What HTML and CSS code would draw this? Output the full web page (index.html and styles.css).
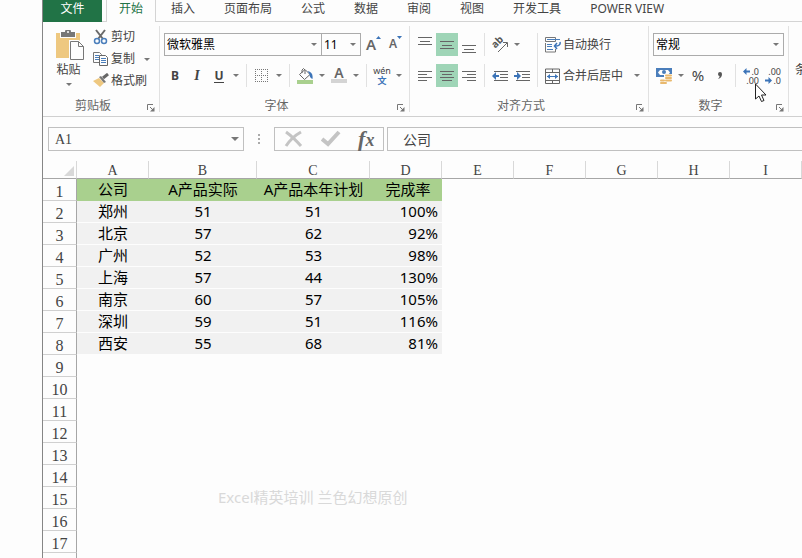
FILE: index.html
```html
<!DOCTYPE html>
<html lang="zh-CN">

<head>
  <meta charset="utf-8">
  <title>Excel</title>
  <link rel="stylesheet" href="styles.css">
</head>

<body>
  <div class="app">
    <!-- ribbon tabs -->
    <nav class="tabs">
      <button class="tab tab-file">文件</button>
      <button class="tab tab-active">开始</button>
      <button class="tab">插入</button>
      <button class="tab">页面布局</button>
      <button class="tab">公式</button>
      <button class="tab">数据</button>
      <button class="tab">审阅</button>
      <button class="tab">视图</button>
      <button class="tab">开发工具</button>
      <button class="tab">POWER VIEW</button>
    </nav>

    <div class="ribbon">
      <!-- clipboard -->
      <section class="group group-clipboard">
        <div class="clipboard">
          <button class="big-tool">
            <svg width="28" height="30" viewBox="0 0 28 30">
              <path d="M0 3h24v25H0z" fill="#eec880" />
              <path d="M4 3h16v5H4z" fill="#fdfdfd" />
              <path d="M5 2h4a3 3 0 0 1 6 0h4v5H5z" fill="#777" />
              <circle cx="12" cy="2" r="1" fill="#fdfdfd" />
              <path d="M13 10h10l5 5v15H13z" fill="#fdfdfd" />
              <path d="M14.500 11.500h8l5 5v13h-13zM22.500 11.500v5h5" fill="#fdfdfd" stroke="#777" />
            </svg>
            <span>粘贴</span>
            <i class="arrow"></i>
          </button>
          <div class="small-tools">
            <button class="text-tool">
              <svg width="16" height="16" viewBox="0 0 16 16" fill="none">
                <path d="M3 1l7 9M12 1L5 10" stroke="#6a6a6a" stroke-width="2" />
                <circle cx="4" cy="12" r="2.500" stroke="#4a7ebb" stroke-width="1.500" />
                <circle cx="11" cy="12" r="2.500" stroke="#4a7ebb" stroke-width="1.500" />
              </svg>
              剪切
            </button>
            <button class="text-tool">
              <svg width="16" height="16" viewBox="0 0 16 16">
                <path d="M.5 1.500h6l2 2v8h-8z" fill="#fdfdfd" stroke="#777" />
                <path d="M2 4.500h4M2 6.500h4M2 8.500h4" stroke="#4a7ebb" />
                <path d="M6.500 4.500h6l2 2v8h-8z" fill="#fdfdfd" stroke="#666" />
                <path d="M8 7.500h5M8 9.500h5M8 11.500h5" stroke="#4a7ebb" />
              </svg>
              复制
              <i class="arrow copy-arrow"></i>
            </button>
            <button class="text-tool">
              <svg width="16" height="16" viewBox="0 0 16 16">
                <path d="M0 8l6-3 5 5-4 4z" fill="#eec880" />
                <path d="M6 4l2-1 5 6-2 1z" fill="#777" />
                <path d="M10 5l5-4" stroke="#666" stroke-width="3" />
              </svg>
              格式刷
            </button>
          </div>
        </div>
        <footer class="group-label">
          <span>剪贴板</span>
          <button class="launcher" aria-label="剪贴板设置"><svg width="8" height="8"><use href="#launch" /></svg></button>
        </footer>
      </section>

      <!-- font -->
      <section class="group group-font">
        <div class="rows">
          <div class="row">
            <label class="combo combo-font"><select aria-label="字体"><option>微软雅黑</option></select></label>
            <label class="combo combo-size"><select aria-label="字号"><option>11</option></select></label>
            <button class="tool tool-size" aria-label="增大字号">
              <span class="grow">A</span><svg width="6" height="12"><path d="M0 6l2.500-3L5 6z" fill="#3c74b8" /></svg>
            </button>
            <button class="tool tool-size" aria-label="减小字号">
              <span class="shrink">A</span><svg width="6" height="12"><path d="M0 3h5L2.500 6z" fill="#3c74b8" /></svg>
            </button>
          </div>
          <div class="row">
            <button class="tool"><b>B</b></button>
            <button class="tool"><i class="italic">I</i></button>
            <button class="tool"><b class="under">U</b></button>
            <i class="arrow"></i>
            <hr class="sep">
            <button class="tool" aria-label="边框">
              <svg width="14" height="14" fill="none" stroke="#777" stroke-dasharray="1 1">
                <path d="M0 .5h13M0 6.500h13M0 12.500h13M.5 0v13M6.500 0v13M12.500 0v13" />
              </svg>
            </button>
            <i class="arrow"></i>
            <hr class="sep">
            <button class="tool" aria-label="填充颜色">
              <svg width="16" height="16" viewBox="0 0 16 16" fill="none">
                <path d="M2.500 6.500L8 1.500l5 5-5.500 5z" stroke="#666" />
                <path d="M5 5V2q1.500-3 3 0v4" stroke="#666" />
                <path d="M10.500 3q6 1 5 8q-3-1-3-5z" fill="#3c74b8" />
                <path d="M0 12h16v4H0z" fill="#a9d08e" />
              </svg>
            </button>
            <i class="arrow"></i>
            <button class="tool tool-color">A</button>
            <i class="arrow"></i>
            <hr class="sep">
            <button class="tool tool-pinyin"><span>wén</span><span class="blue">文</span></button>
            <i class="arrow"></i>
          </div>
        </div>
        <footer class="group-label">
          <span>字体</span>
          <button class="launcher" aria-label="字体设置"><svg width="8" height="8"><use href="#launch" /></svg></button>
        </footer>
      </section>

      <!-- alignment -->
      <section class="group group-align">
        <div class="columns">
          <div class="rows">
            <div class="row">
              <button class="tool" aria-label="顶端对齐">
                <svg width="14" height="16" stroke="#666"><path d="M0 .5h14M2 4.500h10M0 7.500h14" /></svg>
              </button>
              <button class="tool on" aria-label="垂直居中">
                <svg width="14" height="16" stroke="#666"><path d="M0 4.500h14M2 8.500h10M0 11.500h14" /></svg>
              </button>
              <button class="tool" aria-label="底端对齐">
                <svg width="14" height="16" stroke="#666"><path d="M0 8.500h14M2 12.500h10M0 15.500h14" /></svg>
              </button>
              <hr class="sep">
              <button class="tool" aria-label="方向">
                <svg class="turned" width="18" height="18" viewBox="0 0 18 18" fill="none" stroke="#666">
                  <text class="slant" x="-6" y="12" transform="rotate(-45)" fill="#555" stroke="none">ab</text>
                  <path d="M7 16l9-9M12 6.500h4.500V11" />
                </svg>
              </button>
              <i class="arrow"></i>
            </div>
            <div class="row">
              <button class="tool" aria-label="左对齐">
                <svg width="14" height="12" stroke="#666"><path d="M0 1.500h14M0 4.500h9M0 7.500h14M0 10.500h9" /></svg>
              </button>
              <button class="tool on" aria-label="居中">
                <svg width="14" height="12" stroke="#666"><path d="M0 1.500h14M2 4.500h10M0 7.500h14M2 10.500h10" /></svg>
              </button>
              <button class="tool" aria-label="右对齐">
                <svg width="14" height="12" stroke="#666"><path d="M0 1.500h14M5 4.500h9M0 7.500h14M5 10.500h9" /></svg>
              </button>
              <hr class="sep">
              <button class="tool" aria-label="减少缩进量">
                <svg width="16" height="12">
                  <path d="M2 1.500h14M8 4.500h8M8 7.500h8M2 10.500h14" stroke="#666" />
                  <path d="M0 6l4-4v3h3v2H4v3z" fill="#3c74b8" />
                </svg>
              </button>
              <button class="tool" aria-label="增加缩进量">
                <svg width="16" height="12">
                  <path d="M2 1.500h14M8 4.500h8M8 7.500h8M2 10.500h14" stroke="#666" />
                  <path d="M7 6L3 2v3H0v2h3v3z" fill="#3c74b8" />
                </svg>
              </button>
            </div>
          </div>
          <hr class="sep sep-tall">
          <div class="rows">
            <button class="text-tool">
              <svg width="16" height="16" viewBox="0 0 16 16" fill="none">
                <path d="M.5.5h10v4H.5zM.5 6v9h10v-3" stroke="#777" />
                <path d="M2 2.500h13M2 7.500h5M2 9.500h5M2 12.500h6" stroke="#4a7ebb" />
                <path d="M15 5q1 4-5 4M12 6L9.500 9l2.500 3" stroke="#3c74b8" stroke-width="1.500" />
              </svg>
              自动换行
            </button>
            <button class="text-tool">
              <svg width="16" height="16" viewBox="0 0 16 16" fill="none">
                <path d="M.5 1v14.500h14V1zM.5 4.500h14M.5 12.500h14M7.500 1v3M7.500 13v3" stroke="#666" />
                <path d="M2 8.500h11" stroke="#3c74b8" />
                <path d="M5 6L2 8.500 5 11zM10 6l3 2.500-3 2.500z" fill="#3c74b8" />
              </svg>
              合并后居中
              <i class="arrow merge-arrow"></i>
            </button>
          </div>
        </div>
        <footer class="group-label">
          <span>对齐方式</span>
          <button class="launcher" aria-label="对齐设置"><svg width="8" height="8"><use href="#launch" /></svg></button>
        </footer>
      </section>

      <!-- number -->
      <section class="group group-number">
        <div class="rows">
          <div class="row">
            <label class="combo combo-format"><select aria-label="数字格式"><option>常规</option></select></label>
          </div>
          <div class="row">
            <button class="tool" aria-label="会计数字格式">
              <svg width="16" height="16" viewBox="0 0 16 16">
                <path d="M0 0h16v9H0z" fill="#4a7ebb" />
                <path d="M2 4.500L4 2h8l2 2.500L12 7H4z" fill="#fdfdfd" />
                <circle cx="8" cy="4" r="2" fill="#4a7ebb" />
                <path d="M4 9h4V6h8v10H4z" fill="#fdfdfd" />
                <path d="M10 7.500h5M10 10h5M10 12.500h5M5 12.500h3M5 15h5" stroke="#e9b96e" stroke-width="2" stroke-linecap="round" />
              </svg>
            </button>
            <i class="arrow"></i>
            <button class="tool percent">%</button>
            <button class="tool" aria-label="千位分隔样式">
              <svg width="6" height="10"><path d="M1 3a2 2 0 1 1 4 0q0 4-4 5q2-2 1.500-3Q1 5 1 3z" fill="#555" /></svg>
            </button>
            <hr class="sep">
            <button class="tool decimals">
              <span><svg width="7" height="7"><path d="M0 3.500L3.500 0v2.500H7v2H3.500V7z" fill="#3c74b8" /></svg>.0</span>
              <span>.00</span>
            </button>
            <button class="tool decimals">
              <span>.00</span>
              <span><svg width="7" height="7"><path d="M7 3.500L3.500 0v2.500H0v2h3.500V7z" fill="#3c74b8" /></svg>.0</span>
            </button>
          </div>
        </div>
        <footer class="group-label">
          <span>数字</span>
          <button class="launcher" aria-label="数字设置"><svg width="8" height="8"><use href="#launch" /></svg></button>
        </footer>
      </section>

      <section class="group group-styles">
        <button class="styles-tool">条件格式</button>
      </section>
    </div>

    <!-- name box and formula bar -->
    <div class="formula-bar">
      <label class="name-box"><input type="text" value="A1" aria-label="名称框"></label>
      <svg class="grip" width="3" height="11" fill="#aaa"><path d="M0 0h2v2H0zM0 4h2v2H0zM0 8h2v2H0z" /></svg>
      <div class="formula-tools">
        <button aria-label="取消">
          <svg width="20" height="18" fill="none" stroke="#c4c4c4" stroke-width="3"><path d="M2 2q7 5 15 14M17 2Q8 7 2 16" /></svg>
        </button>
        <button aria-label="输入">
          <svg width="20" height="18" fill="none" stroke="#c4c4c4" stroke-width="4"><path d="M1 9l6 5L18 2" /></svg>
        </button>
        <button class="fx">f<small>x</small></button>
      </div>
      <input class="formula" type="text" value="公司" aria-label="编辑栏">
    </div>

    <div class="sheet">
      <table>
        <colgroup>
          <col class="col-head"><col class="col"><col class="col-b"><col class="col-c"><col class="col"><col class="col"><col class="col"><col class="col"><col class="col"><col class="col"><col class="col">
        </colgroup>
        <thead>
          <tr>
            <th class="corner"><svg width="10" height="10"><path d="M10 0v10H0z" fill="#d8d8d8" /></svg></th>
            <th>A</th><th>B</th><th>C</th><th>D</th><th>E</th><th>F</th><th>G</th><th>H</th><th>I</th><th></th>
          </tr>
        </thead>
        <tbody>
          <tr class="title"><th>1</th><td>公司</td><td>A产品实际</td><td>A产品本年计划</td><td class="name">完成率</td></tr>
          <tr class="data"><th>2</th><td>郑州</td><td>51</td><td>51</td><td class="rate">100%</td></tr>
          <tr class="data"><th>3</th><td>北京</td><td>57</td><td>62</td><td class="rate">92%</td></tr>
          <tr class="data"><th>4</th><td>广州</td><td>52</td><td>53</td><td class="rate">98%</td></tr>
          <tr class="data"><th>5</th><td>上海</td><td>57</td><td>44</td><td class="rate">130%</td></tr>
          <tr class="data"><th>6</th><td>南京</td><td>60</td><td>57</td><td class="rate">105%</td></tr>
          <tr class="data"><th>7</th><td>深圳</td><td>59</td><td>51</td><td class="rate">116%</td></tr>
          <tr class="data"><th>8</th><td>西安</td><td>55</td><td>68</td><td class="rate">81%</td></tr>
          <tr><th>9</th></tr>
          <tr><th>10</th></tr>
          <tr><th>11</th></tr>
          <tr><th>12</th></tr>
          <tr><th>13</th></tr>
          <tr><th>14</th></tr>
          <tr><th>15</th></tr>
          <tr><th>16</th></tr>
          <tr><th>17</th></tr>
          <tr><th></th></tr>
        </tbody>
      </table>
      <div class="watermark">Excel精英培训 兰色幻想原创</div>
    </div>
  </div>

  <!-- mouse pointer -->
  <svg class="pointer" width="13" height="20" viewBox="0 0 13 20">
    <path d="M.5 1v15l3.500-3 2.500 5.500 2.500-1L6.500 12H11z" fill="#fff" stroke="#222" />
  </svg>

  <svg class="defs" width="0" height="0">
    <symbol id="launch" viewBox="0 0 8 8">
      <path d="M.5 6V.5H6M3 3l3 3" fill="none" stroke="#777" />
      <path d="M7.500 3v4.500H3z" fill="#777" />
    </symbol>
  </svg>
</body>

</html>
```
FILE: styles.css
```css
* {
  box-sizing: border-box;
}

body {
  margin: 0;
  background-color: #fdfdfd;
  color: #444;
  font: 12px/16px "Noto Sans", "Noto Sans CJK SC", sans-serif;
}

button,
input,
select {
  margin: 0;
  padding: 0;
  border: 0;
  background: none;
  color: inherit;
  font: inherit;
}

svg {
  display: block;
  flex: none;
}

.app {
  height: 100vh;
  margin-left: 42px;
  border-left: 1px solid #868686;
  overflow: hidden;
}

/* tabs */
.tabs {
  display: flex;
  height: 22px;
  overflow: hidden;
  box-shadow: inset 0 -1px #d4d4d4;
}

.tab {
  flex: none;
  height: 22px;
  padding: 0 14px 5px;
  margin-right: 1px;
  white-space: nowrap;
}

.tab-file {
  width: 59px;
  margin-right: 4px;
  background-color: #217346;
  color: #fff;
}

.tab-active {
  padding: 0 12px 5px;
  border: solid #d4d4d4;
  border-width: 0 1px;
  background-color: #fdfdfd;
  color: #217346;
}

/* ribbon */
.ribbon {
  display: flex;
  padding: 4px 0;
  border-bottom: 1px solid #d0d0d0;
  overflow: hidden;
}

.group {
  display: flex;
  flex: none;
  flex-direction: column;
  justify-content: space-between;
  height: 86px;
  border-right: 1px solid #e1e1e1;
}

.group-clipboard {
  width: 117px;
}

.group-font {
  width: 250px;
}

.group-align {
  width: 239px;
}

.group-number {
  width: 140px;
}

.group-styles {
  border: 0;
}

.group-label {
  display: flex;
  align-items: flex-end;
  height: 14px;
  padding-right: 4px;
  color: #666;
  line-height: 12px;
}

.group-label span {
  flex: 1;
  text-align: center;
}

.launcher {
  width: 8px;
  margin-left: 4px;
}

.rows {
  display: flex;
  flex-direction: column;
  gap: 8px;
  padding: 7px 0 0 4px;
}

.columns .rows + .sep + .rows {
  padding-left: 0;
}

.row,
.columns {
  display: flex;
}

.row {
  height: 23px;
}

.tool {
  display: flex;
  flex: none;
  align-items: center;
  justify-content: center;
  width: 22px;
  height: 23px;
}

.on {
  background-color: #9fd5b7;
}

.arrow {
  display: flex;
  flex: none;
  align-items: center;
  justify-content: center;
  width: 12px;
}

.arrow::before {
  border: 3px solid transparent;
  border-top-color: #777;
  border-bottom: 0;
  content: "";
}

.sep {
  width: 1px;
  height: 23px;
  margin: 0 4px;
  border: 0;
  background-color: #e1e1e1;
}

.sep-tall {
  height: 54px;
  margin-top: 7px;
}

.clipboard {
  display: flex;
  padding-left: 7px;
}

.big-tool {
  display: flex;
  flex-direction: column;
  align-items: center;
  gap: 2px;
  width: 37px;
  padding-top: 4px;
}

.big-tool .arrow {
  height: 8px;
}

.big-tool svg {
  margin-left: 3px;
}

.small-tools {
  padding-left: 3px;
}

.text-tool {
  display: flex;
  align-items: center;
  gap: 2px;
  height: 23px;
  padding-left: 3px;
  white-space: nowrap;
}

.small-tools .text-tool {
  height: 22px;
}

.copy-arrow {
  margin-left: 4px;
}

.merge-arrow {
  margin-left: 6px;
}

.combo {
  position: relative;
  height: 23px;
  border: 1px solid #ababab;
  color: #000;
}

.combo select {
  width: 100%;
  height: 21px;
  padding-left: 2px;
  appearance: none;
}

.combo::after,
.name-box::after {
  position: absolute;
  top: 9px;
  right: 4px;
  border: 3px solid transparent;
  border-top-color: #777;
  border-bottom: 0;
  content: "";
}

.combo-font {
  width: 158px;
}

.combo-size {
  width: 40px;
  margin-left: -1px;
}

.combo-format {
  width: 131px;
}

.tool-size {
  padding: 0 0 2px 4px;
  color: #666;
  font-weight: 600;
}

.tool-size svg {
  align-self: flex-start;
}

.grow {
  font-size: 15px;
}

.shrink {
  font-size: 12px;
}

.italic {
  font: italic bold 14px "Liberation Serif", serif;
}

.under {
  border-bottom: 1px solid #444;
  line-height: 13px;
}

.tool-color {
  align-items: flex-end;
  width: 16px;
  height: 19px;
  margin: 0 3px;
  border-bottom: 4px solid #d4d4d4;
  color: #666;
  font-size: 14px;
  font-weight: 600;
  line-height: 12px;
}

.tool-pinyin {
  flex-direction: column;
  font-size: 9px;
  line-height: 10px;
}

.blue {
  color: #3c74b8;
  font-weight: bold;
}

.turned {
  overflow: visible;
}

.slant {
  font: bold 10px "Noto Sans", sans-serif;
}

.percent {
  padding-bottom: 2px;
  font-size: 15px;
}

.decimals {
  flex-direction: column;
  align-items: stretch;
  padding: 0 3px;
  font-size: 9px;
  line-height: 9px;
}

.decimals span {
  display: flex;
  align-items: center;
  justify-content: flex-end;
  gap: 1px;
}

.styles-tool {
  padding: 36px 6px 0;
}

/* formula bar */
.formula-bar {
  display: flex;
  align-items: center;
  padding: 10px 0 10px 5px;
}

.name-box {
  position: relative;
  width: 196px;
  height: 24px;
  border: 1px solid #c0c0c0;
}

.name-box input {
  width: 100%;
  height: 22px;
  padding: 2px 6px 0;
  font: 14px "Liberation Serif", serif;
}

.name-box::after {
  border-width: 4px 4px 0;
}

.grip {
  margin: 0 13px 0 14px;
}

.formula-tools {
  display: flex;
  align-items: center;
  justify-content: space-around;
  width: 110px;
  height: 24px;
  border: 1px solid #c0c0c0;
}

.fx {
  color: #666;
  font: italic bold 22px/20px "Liberation Serif", serif;
}

.fx small {
  font-size: 18px;
}

.formula {
  flex: 1;
  height: 24px;
  margin-left: 3px;
  padding-left: 15px;
  border: 1px solid #c0c0c0;
  border-right: 0;
  font-size: 14px;
}

/* sheet */
.sheet {
  position: relative;
}

table {
  width: 0;
  border-spacing: 0;
  table-layout: fixed;
}

.col-head {
  width: 34px;
}

.col {
  width: 72px;
}

.col-b {
  width: 108px;
}

.col-c {
  width: 113px;
}

th,
td {
  padding: 0;
  text-align: center;
  white-space: nowrap;
}

thead th {
  height: 18px;
  padding-top: 3px;
  border-right: 1px solid #d8d8d8;
  border-bottom: 1px solid #a6a6a6;
  font: 14px/14px "Liberation Serif", serif;
}

.corner svg {
  margin-left: 21px;
}

tbody th {
  height: 22px;
  padding-top: 5px;
  border-right: 1px solid #a6a6a6;
  border-bottom: 1px solid #d0d0d0;
  font: 16px/16px "Liberation Serif", serif;
}

td {
  color: #000;
  font-size: 15px;
  line-height: 21px;
}

.title td {
  border-bottom: 1px solid #a9d08e;
  background-color: #a9d08e;
}

.data td {
  border-bottom: 1px solid #fdfdfd;
  background-color: #f1f1f1;
}

.rate {
  padding-right: 4px;
  text-align: right;
}

.name {
  padding-left: 4px;
}

.watermark {
  position: absolute;
  top: 326px;
  left: 175px;
  color: #d9d9d9;
  font-size: 15px;
  line-height: 20px;
}

/* overlays */
.pointer {
  position: absolute;
  top: 83px;
  left: 755px;
}

.defs {
  position: absolute;
}
```
